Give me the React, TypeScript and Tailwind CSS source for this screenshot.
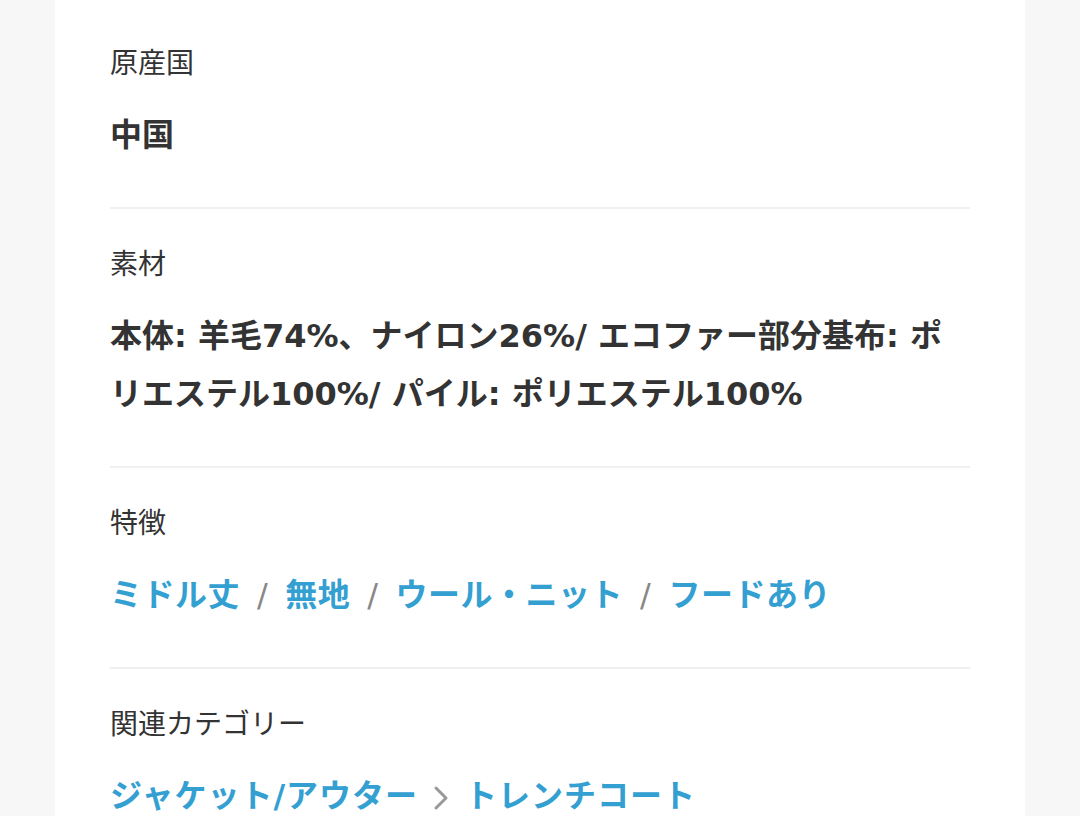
const font = "font-['DejaVu_Sans','Noto_Sans_CJK_JP',sans-serif]";

function Label({ children }: { children: React.ReactNode }) {
  return <div className="text-[28px] leading-[36px] font-normal text-[#333]">{children}</div>;
}

function Slash() {
  return <span className="mx-[17px] font-normal text-[#888]">/</span>;
}

function Chevron() {
  return (
    <svg width="17" height="28" viewBox="0 0 17 28" className="mx-[15px] mt-[4px] inline-block" fill="none">
      <path d="M3 4l10 10-10 10" stroke="#999" strokeWidth="3" strokeLinecap="round" strokeLinejoin="round" />
    </svg>
  );
}

function Section({ label, children, last }: { label: string; children: React.ReactNode; last?: boolean }) {
  return (
    <div className={last ? "pt-[38px] pb-[43px]" : "pt-[38px] pb-[43px] border-b-2 border-[#f0f0f0]"}>
      <Label>{label}</Label>
      <div className="mt-[24px] text-[32px] leading-[58px] font-bold text-[#333]">{children}</div>
    </div>
  );
}

export default function App() {
  const features = ["ミドル丈", "無地", "ウール・ニット", "フードあり"];
  return (
    <div className={`h-[816px] overflow-hidden bg-[#f7f7f7] px-[55px] ${font}`}>
      <div className="h-full bg-white px-[55px] pt-[8px]">
        <Section label="原産国">中国</Section>
        <Section label="素材">
          本体: 羊毛74%、ナイロン26%/ エコファー部分基布: ポリエステル100%/ パイル: ポリエステル100%
        </Section>
        <Section label="特徴">
          <div className="text-[#34a0d2] tracking-[0.5px]">
            {features.map((f, i) => (
              <span key={f}>
                {i > 0 && <Slash />}
                <a href="#">{f}</a>
              </span>
            ))}
          </div>
        </Section>
        <Section label="関連カテゴリー" last>
          <div className="flex items-center text-[#34a0d2] tracking-[1px]">
            <a href="#">ジャケット/アウター</a>
            <Chevron />
            <a href="#">トレンチコート</a>
          </div>
        </Section>
      </div>
    </div>
  );
}
